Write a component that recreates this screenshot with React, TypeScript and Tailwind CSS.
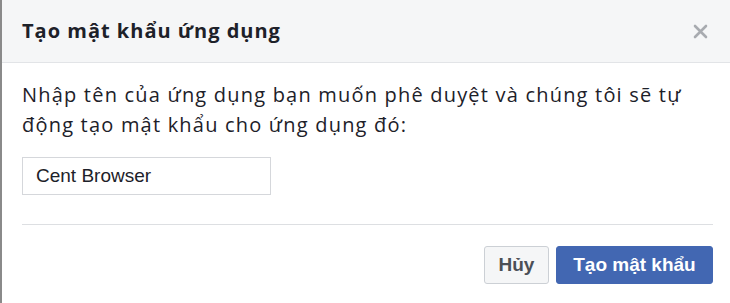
export default function App() {
  return (
    <div
      className="w-[730px] h-[303px] bg-white border-l-2 border-[#8a8a8a] overflow-hidden flex flex-col"
      style={{ fontFamily: '"Liberation Sans", Arial, sans-serif' }}
    >
      {/* Header */}
      <div className="h-[63px] shrink-0 bg-[#f5f6f7] border-b border-[#e2e4e7] flex items-center justify-between pl-[20px] pr-[22px]">
        <h1 className="text-[20px] font-bold tracking-[1px] text-[#1d2129] font-['Open_Sans',sans-serif]">Tạo mật khẩu ứng dụng</h1>
        <svg width="15" height="15" viewBox="0 0 15 15" className="text-[#a8abb0]">
          <path d="M2 2 L13 13 M13 2 L2 13" stroke="currentColor" strokeWidth="2.6" strokeLinecap="round" />
        </svg>
      </div>

      {/* Body */}
      <div className="pl-[20px] pr-[17px] pt-[17px]">
        <p className="text-[20px] leading-[30px] tracking-[1.2px] text-[#1d2129] font-['Open_Sans',sans-serif]">
          Nhập tên của ứng dụng bạn muốn phê duyệt và chúng tôi sẽ tự động tạo mật khẩu cho ứng dụng đó:
        </p>
        <input
          type="text"
          defaultValue="Cent Browser"
          className="mt-[17px] w-[249px] h-[38px] border border-[#d5d7db] px-[13px] text-[19px] text-[#1d2129] outline-none"
        />
        <div className="mt-[29px] border-t border-[#dddfe2]" />
        <div className="flex justify-end gap-[7px] mt-[21px]">
          <button className="w-[65px] h-[38px] rounded-[3px] border border-[#ccd0d5] bg-[#f5f6f7] text-[19px] font-bold text-[#4b4f56]">
            Hủy
          </button>
          <button className="w-[157px] h-[38px] rounded-[3px] border border-[#4267b2] bg-[#4267b2] text-[19px] font-bold text-white">
            Tạo mật khẩu
          </button>
        </div>
      </div>
    </div>
  );
}
